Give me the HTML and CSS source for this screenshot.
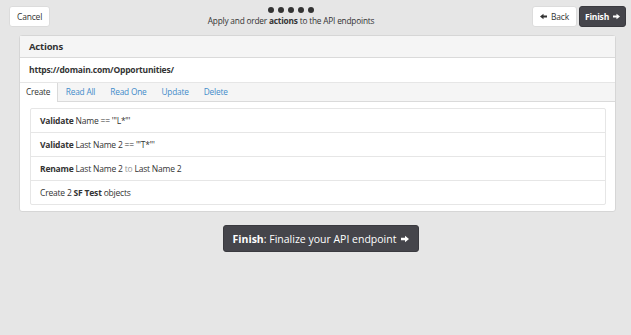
FILE: index.html
```html
<!DOCTYPE html>
<html lang="en">

<head>
  <meta charset="UTF-8" />
  <title>Actions</title>
  <link rel="stylesheet" href="styles.css">
</head>

<body>
  <!-- Top bar -->
  <div class="topbar">
    <button class="btn">Cancel</button>
    <div class="steps">
      <div class="dots">
        <span></span><span></span><span></span><span></span><span></span>
      </div>
      <div class="step-text">Apply and order <strong>actions</strong> to the API endpoints</div>
    </div>
    <div class="nav">
      <button class="btn btn-back">
        <svg class="arrow" viewBox="0 0 10 10"><path d="M0 5 L5 1 L5 3.4 L10 3.4 L10 6.6 L5 6.6 L5 9 Z" /></svg>
        <span>Back</span>
      </button>
      <button class="btn btn-dark">
        <span>Finish</span>
        <svg class="arrow" viewBox="0 0 10 10"><path d="M10 5 L5 1 L5 3.4 L0 3.4 L0 6.6 L5 6.6 L5 9 Z" /></svg>
      </button>
    </div>
  </div>

  <!-- Actions panel -->
  <div class="panel">
    <div class="panel-heading">Actions</div>
    <div class="endpoint">https://domain.com/Opportunities/</div>
    <ul class="tabs">
      <li class="active">Create</li>
      <li>Read All</li>
      <li>Read One</li>
      <li>Update</li>
      <li>Delete</li>
    </ul>
    <div class="panel-body">
      <div class="list">
        <div class="row"><strong>Validate</strong> Name == '"L*"'</div>
        <div class="row"><strong>Validate</strong> Last Name 2 == '"T*"'</div>
        <div class="row"><strong>Rename</strong> Last Name 2 <span class="muted">to</span> Last Name 2</div>
        <div class="row">Create 2 <strong>SF Test</strong> objects</div>
      </div>
    </div>
  </div>

  <div class="finish-wrap">
    <button class="btn-finish">
      <span><strong>Finish</strong>: Finalize your API endpoint</span>
      <svg class="arrow" viewBox="0 0 10 10"><path d="M10 5 L5 1 L5 3.4 L0 3.4 L0 6.6 L5 6.6 L5 9 Z" /></svg>
    </button>
  </div>
</body>

</html>
```

FILE: styles.css
```css
/* Page */
body {
  margin: 0;
  background-color: #e6e6e6;
  font-family: 'Open Sans', 'Liberation Sans', sans-serif;
  font-size: 8.5px;
  letter-spacing: -0.2px;
  color: #333;
}

/* Top bar */
.topbar {
  display: flex;
  align-items: flex-start;
  padding: 6px 5px 0 9px;
}

.btn {
  height: 21px;
  padding: 0 7px;
  background-color: #fff;
  border: 1px solid #dcdcdc;
  border-radius: 3px;
  font-family: inherit;
  font-size: 8.5px;
  letter-spacing: -0.2px;
  color: #333;
  display: flex;
  align-items: center;
  gap: 4px;
}

.btn-back {
  width: 45px;
  justify-content: center;
}

.btn-dark {
  width: 47px;
  justify-content: center;
  background-color: #45454b;
  border-color: #3a3a3f;
  color: #fff;
  font-weight: bold;
}

.arrow {
  width: 7px;
  height: 7px;
  flex-shrink: 0;
  fill: currentColor;
}

.steps {
  flex: 1;
  text-align: center;
  padding-top: 1px;
}

.dots {
  display: flex;
  justify-content: center;
  gap: 4px;
}

.dots span {
  width: 6px;
  height: 6px;
  border-radius: 50%;
  background-color: #333;
}

.step-text {
  margin-top: 2px;
  font-size: 8.3px;
}

.nav {
  display: flex;
  gap: 2px;
}

/* Panel */
.panel {
  margin: 8px 15px 0 19px;
  background-color: #fff;
  border: 1px solid #d6d6d6;
  border-radius: 3px;
}

.panel-heading {
  height: 21px;
  line-height: 21px;
  padding-left: 9px;
  background-color: #f5f5f5;
  border-bottom: 1px solid #dadada;
  font-size: 9.5px;
  font-weight: bold;
}

.endpoint {
  height: 24px;
  line-height: 24px;
  padding-left: 9px;
  font-weight: bold;
  border-bottom: 1px solid #e6e6e6;
}

.tabs {
  list-style: none;
  margin: 0;
  padding: 0;
  display: flex;
  height: 18px;
  background-color: #f5f5f5;
  border-bottom: 1px solid #dadada;
  font-size: 8.3px;
}

.tabs li {
  padding: 0 7.5px;
  line-height: 18px;
  color: #428bca;
}

.tabs li.active {
  padding: 0 7px 0 6px;
  background-color: #fff;
  color: #333;
  border-right: 1px solid #dadada;
  height: 19px;
}

.panel-body {
  padding: 6px 9px 6px 10px;
}

.list {
  border: 1px solid #e6e6e6;
  border-radius: 2px;
}

.row {
  height: 23px;
  line-height: 23px;
  padding-left: 9px;
  border-bottom: 1px solid #e6e6e6;
}

.row:last-child {
  border-bottom: none;
}

.muted {
  color: #999;
}

/* Bottom finish button */
.finish-wrap {
  display: flex;
  justify-content: center;
  padding: 13px 0 0 11px;
}

.btn-finish {
  height: 27px;
  padding: 0 9px;
  background-color: #45454b;
  border: 1px solid #3a3a3f;
  border-radius: 3px;
  color: #fff;
  font-family: inherit;
  font-size: 10.5px;
  display: flex;
  align-items: center;
  gap: 5px;
}

.btn-finish .arrow {
  width: 8px;
  height: 8px;
}
```
